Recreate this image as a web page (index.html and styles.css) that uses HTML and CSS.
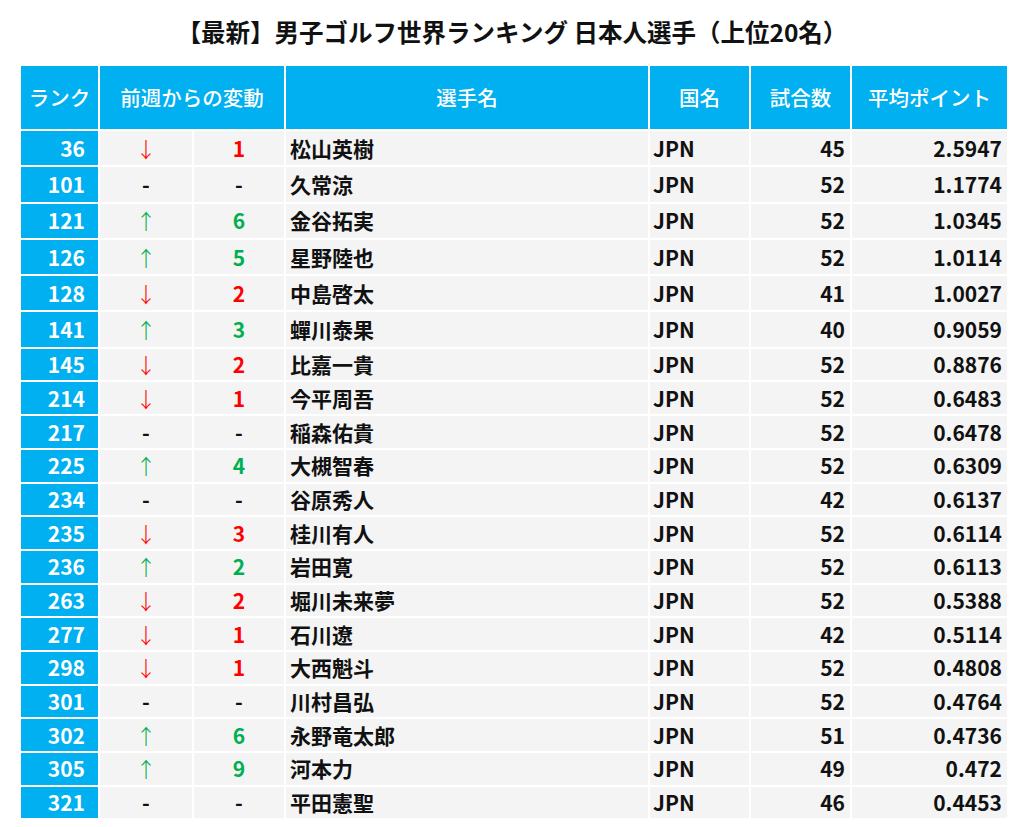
FILE: index.html
```html
<!DOCTYPE html>
<html lang="ja">
<head>
<meta charset="utf-8">
<link rel="stylesheet" href="styles.css">
</head>
<body>
<h1 class="title">【最新】男子ゴルフ世界ランキング 日本人選手（上位20名）</h1>
<div class="table">
  <div class="th">ランク</div>
  <div class="th span2">前週からの変動</div>
  <div class="th">選手名</div>
  <div class="th">国名</div>
  <div class="th">試合数</div>
  <div class="th">平均ポイント</div>

  <div class="rank">36</div><div class="c arrow down">↓</div><div class="c num down">1</div><div class="name">松山英樹</div><div class="country">JPN</div><div class="r">45</div><div class="r">2.5947</div>
  <div class="rank">101</div><div class="c">-</div><div class="c">-</div><div class="name">久常涼</div><div class="country">JPN</div><div class="r">52</div><div class="r">1.1774</div>
  <div class="rank">121</div><div class="c arrow up">↑</div><div class="c num up">6</div><div class="name">金谷拓実</div><div class="country">JPN</div><div class="r">52</div><div class="r">1.0345</div>
  <div class="rank">126</div><div class="c arrow up">↑</div><div class="c num up">5</div><div class="name">星野陸也</div><div class="country">JPN</div><div class="r">52</div><div class="r">1.0114</div>
  <div class="rank">128</div><div class="c arrow down">↓</div><div class="c num down">2</div><div class="name">中島啓太</div><div class="country">JPN</div><div class="r">41</div><div class="r">1.0027</div>
  <div class="rank">141</div><div class="c arrow up">↑</div><div class="c num up">3</div><div class="name">蟬川泰果</div><div class="country">JPN</div><div class="r">40</div><div class="r">0.9059</div>
  <div class="rank">145</div><div class="c arrow down">↓</div><div class="c num down">2</div><div class="name">比嘉一貴</div><div class="country">JPN</div><div class="r">52</div><div class="r">0.8876</div>
  <div class="rank">214</div><div class="c arrow down">↓</div><div class="c num down">1</div><div class="name">今平周吾</div><div class="country">JPN</div><div class="r">52</div><div class="r">0.6483</div>
  <div class="rank">217</div><div class="c">-</div><div class="c">-</div><div class="name">稲森佑貴</div><div class="country">JPN</div><div class="r">52</div><div class="r">0.6478</div>
  <div class="rank">225</div><div class="c arrow up">↑</div><div class="c num up">4</div><div class="name">大槻智春</div><div class="country">JPN</div><div class="r">52</div><div class="r">0.6309</div>
  <div class="rank">234</div><div class="c">-</div><div class="c">-</div><div class="name">谷原秀人</div><div class="country">JPN</div><div class="r">42</div><div class="r">0.6137</div>
  <div class="rank">235</div><div class="c arrow down">↓</div><div class="c num down">3</div><div class="name">桂川有人</div><div class="country">JPN</div><div class="r">52</div><div class="r">0.6114</div>
  <div class="rank">236</div><div class="c arrow up">↑</div><div class="c num up">2</div><div class="name">岩田寛</div><div class="country">JPN</div><div class="r">52</div><div class="r">0.6113</div>
  <div class="rank">263</div><div class="c arrow down">↓</div><div class="c num down">2</div><div class="name">堀川未来夢</div><div class="country">JPN</div><div class="r">52</div><div class="r">0.5388</div>
  <div class="rank">277</div><div class="c arrow down">↓</div><div class="c num down">1</div><div class="name">石川遼</div><div class="country">JPN</div><div class="r">42</div><div class="r">0.5114</div>
  <div class="rank">298</div><div class="c arrow down">↓</div><div class="c num down">1</div><div class="name">大西魁斗</div><div class="country">JPN</div><div class="r">52</div><div class="r">0.4808</div>
  <div class="rank">301</div><div class="c">-</div><div class="c">-</div><div class="name">川村昌弘</div><div class="country">JPN</div><div class="r">52</div><div class="r">0.4764</div>
  <div class="rank">302</div><div class="c arrow up">↑</div><div class="c num up">6</div><div class="name">永野竜太郎</div><div class="country">JPN</div><div class="r">51</div><div class="r">0.4736</div>
  <div class="rank">305</div><div class="c arrow up">↑</div><div class="c num up">9</div><div class="name">河本力</div><div class="country">JPN</div><div class="r">49</div><div class="r">0.472</div>
  <div class="rank">321</div><div class="c">-</div><div class="c">-</div><div class="name">平田憲聖</div><div class="country">JPN</div><div class="r">46</div><div class="r">0.4453</div>
</div>
</body>
</html>
```

FILE: styles.css
```css
html, body {
  margin: 0;
  padding: 0;
  background: #ffffff;
}
body {
  font-family: "Noto Sans CJK JP", "Noto Sans", sans-serif;
  color: #111111;
}
.title {
  margin: 0;
  padding-top: 15px;
  height: 33px;
  line-height: 33px;
  margin-bottom: 18px;
  font-size: 24.5px;
  font-weight: 700;
  text-align: center;
}
.table {
  margin-left: 21px;
  display: grid;
  grid-template-columns: 77px 92px 90px 362px 99px 99px 155px;
  grid-template-rows: 63px repeat(6, 34.3px) repeat(14, 31.7px);
  column-gap: 2px;
  row-gap: 2px;
  font-size: 21px;
  font-weight: 700;
}
.table > div {
  display: flex;
  align-items: center;
  background: #f4f4f4;
  line-height: 1;
  box-sizing: border-box;
}
.table > .th {
  background: #00b0f0;
  color: #ffffff;
  justify-content: center;
  font-weight: 500;
  font-size: 20.5px;
}
.table > .span2 {
  grid-column: span 2;
}
.table > .rank {
  background: #00b0f0;
  color: #ffffff;
  justify-content: flex-end;
  padding-right: 13px;
}
.table > .c {
  justify-content: center;
}
.table > .name {
  padding-left: 4px;
}
.table > .country {
  padding-left: 3px;
}
.table > .r {
  justify-content: flex-end;
  padding-right: 5px;
}
.table > .arrow {
  font-weight: 300;
}
.down {
  color: #ff0000;
}
.up {
  color: #00b050;
}
```
